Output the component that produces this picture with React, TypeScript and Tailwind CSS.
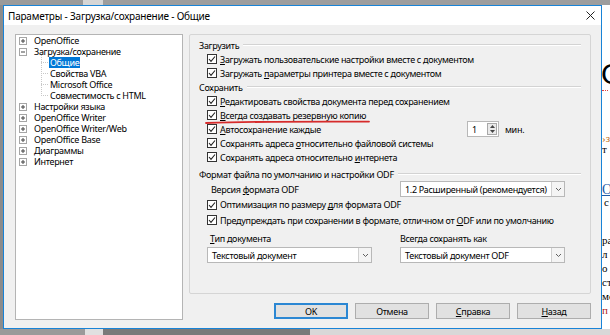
import React from "react";

function Check() {
  return (
    <span className="w-[10px] h-[10px] border border-[#333] bg-white flex items-center justify-center shrink-0">
      <svg width="8" height="8" viewBox="0 0 8 8">
        <polyline points="1,4 3,6.3 7,1.5" fill="none" stroke="#222" strokeWidth="1.1" />
      </svg>
    </span>
  );
}

function CheckRow({ children, h = "h-[14px]" }: { children: React.ReactNode; h?: string }) {
  return (
    <div className={`flex items-center gap-[3px] pl-[8px] ${h}`}>
      <Check />
      <span className="whitespace-nowrap">{children}</span>
    </div>
  );
}

function Header({ children, mt = "" }: { children: React.ReactNode; mt?: string }) {
  return (
    <div className={`flex items-center h-[14px] pr-[9px] ${mt}`}>
      <span className="whitespace-nowrap">{children}</span>
      <span className="flex-1 ml-[4px] h-[2px] border-t border-[#d3d3d3] border-b-white border-b" />
    </div>
  );
}

function Chevron() {
  return (
    <svg width="7" height="5" viewBox="0 0 7 5">
      <polyline points="1,1 3.5,3.5 6,1" fill="none" stroke="#606060" strokeWidth="1" />
    </svg>
  );
}

function Combo({ text }: { text: string }) {
  return (
    <div className="w-[165px] h-[16px] border border-[#b8b8b8] bg-white flex items-center">
      <span className="flex-1 pl-[4px] whitespace-nowrap">{text}</span>
      <span className="w-[13px] h-[14px] border-l border-[#d0d0d0] bg-[#f4f4f4] flex items-center justify-center">
        <Chevron />
      </span>
    </div>
  );
}

function Expander({ open }: { open?: boolean }) {
  return (
    <svg width="8" height="8" viewBox="0 0 8 8" className="shrink-0">
      <rect x="0.5" y="0.5" width="7" height="7" fill="#fff" stroke="#a5a5a5" />
      <line x1="2" y1="4" x2="6" y2="4" stroke="#444" />
      {!open && <line x1="4" y1="2" x2="4" y2="6" stroke="#444" />}
    </svg>
  );
}

function TreeItem({ label, open }: { label: string; open?: boolean }) {
  return (
    <div className="h-[11px] flex items-center pl-[3px]">
      <Expander open={open} />
      <span className="ml-[7px] whitespace-nowrap">{label}</span>
    </div>
  );
}

function Child({ label, selected }: { label: string; selected?: boolean }) {
  return (
    <div className="h-[11px] flex items-center pl-[25px]">
      <span className="w-[7px] border-t border-dotted border-[#c8c8c8]" />
      <span
        className={`ml-[1px] px-[1px] whitespace-nowrap leading-[11px] ${
          selected ? "bg-[#0078d7] text-white" : ""
        }`}
      >
        {label}
      </span>
    </div>
  );
}

function Btn({ children, primary }: { children: React.ReactNode; primary?: boolean }) {
  return (
    <div
      className={`w-[74px] h-[16px] flex items-center justify-center bg-[#e1e1e1] ${
        primary ? "border-2 border-[#2b87d3]" : "border border-[#adadad]"
      }`}
    >
      {children}
    </div>
  );
}

export default function App() {
  return (
    <div className="w-[610px] h-[335px] overflow-hidden bg-[#a0a0a0] flex flex-col font-['Noto_Sans',sans-serif] text-[9px] tracking-[-0.3px] leading-none text-black">
      {/* top strip */}
      <div className="h-[5px] flex shrink-0">
        <div className="w-[83px] bg-[#9a9a9a]" />
        <div className="w-[20px] bg-[#d6d6d6]" />
        <div className="flex-1 bg-[#9d9d9d]" />
      </div>
      <div className="flex h-[324px] shrink-0">
        <div className="w-[3px] bg-[#8c8c8c]" />
        {/* dialog */}
        <div className="w-[599px] border border-[#1883d7] flex flex-col bg-[#f0f0f0]">
          <div className="h-[19px] bg-white flex items-center justify-between pl-[4px] pr-[6px] shrink-0">
            <span className="text-[10px] tracking-[-0.2px] whitespace-nowrap">Параметры - Загрузка/сохранение - Общие</span>
            <svg width="9" height="9" viewBox="0 0 9 9">
              <line x1="0.5" y1="0.5" x2="8.5" y2="8.5" stroke="#222" strokeWidth="1" />
              <line x1="8.5" y1="0.5" x2="0.5" y2="8.5" stroke="#222" strokeWidth="1" />
            </svg>
          </div>
          <div className="flex-1 flex pl-[11px] pt-[9px] pb-[8px] gap-[6px]">
            {/* tree */}
            <div className="w-[168px] h-[286px] bg-white border border-[#b4b4b4] relative">
              <TreeItem label="OpenOffice" />
              <TreeItem label="Загрузка/сохранение" open />
              <div className="relative">
                <span className="absolute left-[25px] top-[-2px] h-[41px] border-l border-dotted border-[#c8c8c8]" />
                <Child label="Общие" selected />
                <Child label="Свойства VBA" />
                <Child label="Microsoft Office" />
                <Child label="Совместимость с HTML" />
              </div>
              <TreeItem label="Настройки языка" />
              <TreeItem label="OpenOffice Writer" />
              <TreeItem label="OpenOffice Writer/Web" />
              <TreeItem label="OpenOffice Base" />
              <TreeItem label="Диаграммы" />
              <TreeItem label="Интернет" />
            </div>
            {/* right column */}
            <div className="w-[402px] flex flex-col">
              <div className="h-[260px] border border-[#d5d5d5] rounded-[2px] pl-[9px] pt-[3px] relative">
                <Header>Загрузить</Header>
                <CheckRow>
                  <u>З</u>агружать пользовательские настройки вместе с документом
                </CheckRow>
                <CheckRow>
                  Загружать <u>п</u>араметры принтера вместе с документом
                </CheckRow>
                <Header>Сохранить</Header>
                <CheckRow>
                  <u>Р</u>едактировать свойства документа перед сохранением
                </CheckRow>
                <CheckRow>
                  <u>В</u>сегда создавать резервную копию
                </CheckRow>
                <div className="flex items-center h-[14px] pl-[8px]">
                  <Check />
                  <span className="ml-[3px] w-[247px] whitespace-nowrap">
                    <u>А</u>втосохранение каждые
                  </span>
                  <div className="w-[32px] h-[16px] border border-[#b8b8b8] bg-white flex items-center shrink-0">
                    <span className="flex-1 pl-[4px]">1</span>
                    <span className="w-[10px] h-[12px] mr-[1px] border border-[#a8a8a8] bg-[#eaeaea] flex flex-col items-center justify-around">
                      <svg width="5" height="3" viewBox="0 0 5 3">
                        <polygon points="0,3 2.5,0 5,3" fill="#444" />
                      </svg>
                      <svg width="5" height="3" viewBox="0 0 5 3">
                        <polygon points="0,0 2.5,3 5,0" fill="#444" />
                      </svg>
                    </span>
                  </div>
                  <span className="ml-[6px]">мин.</span>
                </div>
                <CheckRow>
                  Сохранять адреса <u>о</u>тносительно файловой системы
                </CheckRow>
                <CheckRow>
                  Сохранять адреса относительно <u>и</u>нтернета
                </CheckRow>
                <Header mt="mt-[3px]">Формат файла по умолчанию и настройки ODF</Header>
                <div className="flex items-center h-[16px] pl-[8px] gap-[28px]">
                  <span className="w-[165px] pl-[4px] whitespace-nowrap">
                    Версия <u>ф</u>ормата ODF
                  </span>
                  <Combo text="1.2 Расширенный (рекомендуется)" />
                </div>
                <CheckRow h="h-[15px]">
                  Оптимизация по размеру <u>д</u>ля формата ODF
                </CheckRow>
                <CheckRow h="h-[16px]">
                  Предупреждать при сохранении в формате, отличном от <u>O</u>DF или по умолчанию
                </CheckRow>
                <div className="flex items-center h-[16px] pl-[8px] gap-[28px] mt-[2px]">
                  <span className="w-[165px] pl-[3px] whitespace-nowrap">
                    <u>Т</u>ип документа
                  </span>
                  <span className="w-[165px] whitespace-nowrap">Всегда сохранять как</span>
                </div>
                <div className="flex items-center pl-[8px] gap-[28px] mt-[1px]">
                  <Combo text="Текстовый документ" />
                  <Combo text="Текстовый документ ODF" />
                </div>
                <svg
                  className="absolute left-[15px] top-[84px]"
                  width="166"
                  height="6"
                  viewBox="0 0 166 6"
                >
                  <path d="M1 4 Q 60 2.2 164 2.6" fill="none" stroke="#d62b2b" strokeWidth="1.8" strokeLinecap="round" />
                </svg>
              </div>
              <div className="flex justify-end gap-[7px] mt-[9px]">
                <Btn primary>OK</Btn>
                <Btn>Отмена</Btn>
                <Btn>
                  <span>
                    <u>С</u>правка
                  </span>
                </Btn>
                <Btn>
                  <span>
                    <u>Н</u>азад
                  </span>
                </Btn>
              </div>
            </div>
          </div>
        </div>
        {/* document strip */}
        <div className="flex-1 bg-white overflow-hidden flex flex-col font-['Liberation_Serif',serif] text-[11px] tracking-normal leading-none">
          <div className="h-[54px] shrink-0" />
          <div className="h-[30px] text-[30px] leading-[30px] -ml-[1px] shrink-0 font-['Liberation_Sans',sans-serif]">О</div>
          <div className="h-[2px] border-b border-dotted border-[#e04040] w-[6px] shrink-0" />
          <div className="h-[42px] shrink-0" />
          <div className="h-[11px] shrink-0 text-[#c07020]">›з</div>
          <div className="h-[11px] shrink-0">т</div>
          <div className="h-[28px] shrink-0" />
          <div className="h-[14px] shrink-0 text-[14px] text-[#1f5aa6] underline">О</div>
          <div className="h-[13px] shrink-0 pl-[2px]">с</div>
          <div className="h-[25px] shrink-0" />
          <div className="h-[14px] shrink-0">ра</div>
          <div className="h-[14px] shrink-0">л</div>
          <div className="h-[14px] shrink-0">о</div>
          <div className="h-[14px] shrink-0">ст</div>
          <div className="h-[14px] shrink-0">мс</div>
          <div className="h-[14px] shrink-0 text-[#b02020]">п</div>
        </div>
      </div>
      <div className="h-[6px] flex shrink-0">
        <div className="w-[85px] bg-[#9a9a9a]" />
        <div className="w-[18px] bg-[#e0e0e0]" />
        <div className="w-[207px] bg-[#7a7a7a]" />
        <div className="flex-1 bg-[#d8d8d8]" />
      </div>
    </div>
  );
}
